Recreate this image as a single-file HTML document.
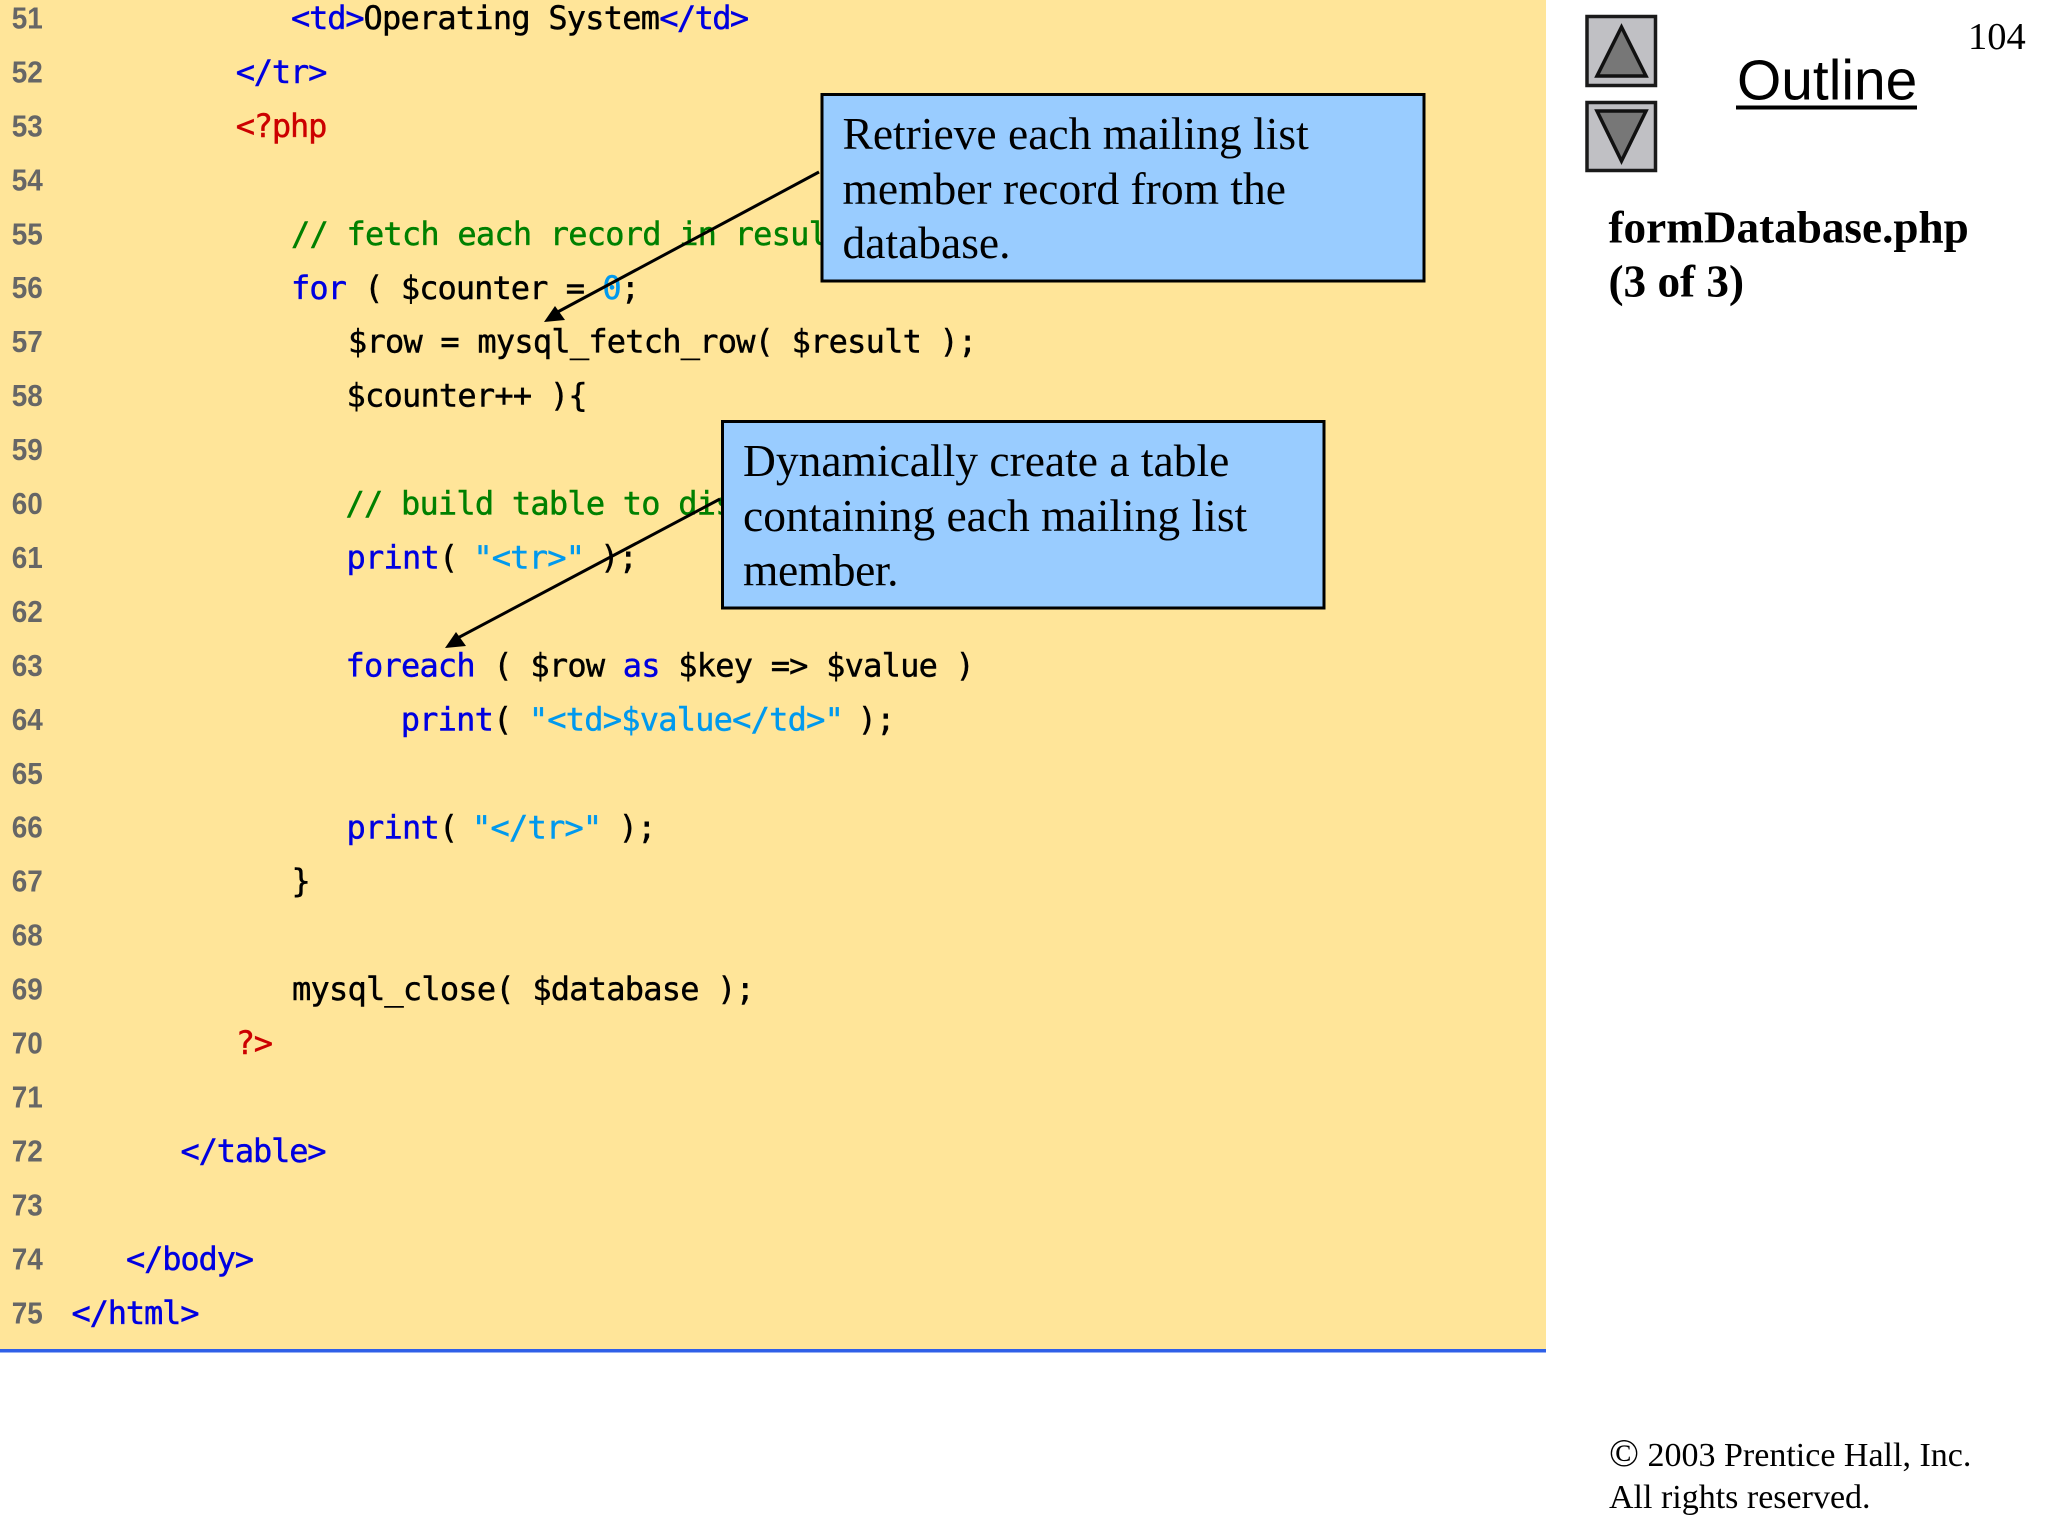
<!DOCTYPE html>
<html><head><meta charset="utf-8"><style>
html,body{margin:0;padding:0;background:#fff;width:2048px;height:1536px;overflow:hidden}
svg{position:absolute;left:0;top:0;display:block}
text{white-space:pre}
.n{font:bold 31px "Liberation Sans",sans-serif;fill:#666}
.c{font:500 32px "DejaVu Sans Mono",monospace;letter-spacing:-.78px;fill:#000;color:#000;stroke:currentColor;stroke-width:.45px}
.b{fill:#0000e0;color:#0000e0}.s{fill:#0099ee;color:#0099ee}.g{fill:#008000;color:#008000}.r{fill:#cc0000;color:#cc0000}
.tg{letter-spacing:-1.15px}
.t{font:45.5px "Liberation Serif",serif;fill:#000}
.h{font:bold 45.2px "Liberation Serif",serif;fill:#000}
.f{font:34px "Liberation Serif",serif;fill:#000}
</style></head><body>
<svg width="2048" height="1536" viewBox="0 0 2048 1536" xmlns="http://www.w3.org/2000/svg">
<rect x="0" y="0" width="1546" height="1349" fill="#ffe599"/>
<rect x="0" y="1349" width="1546" height="3.500" fill="#2f60e8"/>
<g class="n" transform="scale(.9 1)">
<text x="13" y="28.500">51</text><text x="13" y="82.400">52</text><text x="13" y="136.400">53</text><text x="13" y="190.300">54</text><text x="13" y="244.300">55</text><text x="13" y="298.200">56</text><text x="13" y="352.200">57</text><text x="13" y="406.100">58</text><text x="13" y="460.100">59</text><text x="13" y="514">60</text><text x="13" y="568">61</text><text x="13" y="621.900">62</text><text x="13" y="675.900">63</text><text x="13" y="729.800">64</text><text x="13" y="783.800">65</text><text x="13" y="837.700">66</text><text x="13" y="891.700">67</text><text x="13" y="945.600">68</text><text x="13" y="999.600">69</text><text x="13" y="1053.500">70</text><text x="13" y="1107.500">71</text><text x="13" y="1161.400">72</text><text x="13" y="1215.400">73</text><text x="13" y="1269.300">74</text><text x="13" y="1323.300">75</text>
</g>
<g class="c">
<text x="291" y="29"><tspan class="b tg">&lt;td&gt;</tspan>Operating System<tspan class="b" style="letter-spacing:-1.6px">&lt;/td&gt;</tspan></text>
<text x="235.700" y="82.950" class="b tg">&lt;/tr&gt;</text>
<text x="235.700" y="136.900" class="r tg">&lt;?php</text>
<text x="291" y="244.800" class="g">// fetch each record in result set</text>
<text x="291" y="298.750" style="letter-spacing:-.95px"><tspan class="b">for</tspan> ( $counter = <tspan class="s">0</tspan>;</text>
<text x="348" y="352.700">$row = mysql_fetch_row( $result );</text>
<text x="346.500" y="406.650">$counter++ ){</text>
<text x="345.500" y="514.550" class="g">// build table to display results</text>
<text x="346.500" y="568.500"><tspan class="b">print</tspan>( <tspan class="s" dx="-2.600">"&lt;tr&gt;"</tspan><tspan dx="-2.600"> );</tspan></text>
<text x="345.500" y="676.400"><tspan class="b">foreach</tspan> ( $row <tspan class="b">as</tspan> $key =&gt; $value )</text>
<text x="400.700" y="730.350"><tspan class="b">print</tspan>( <tspan class="s" dx="-1.300">"&lt;td&gt;$value&lt;/td&gt;"</tspan><tspan dx="-3.900"> );</tspan></text>
<text x="346.500" y="838.250"><tspan class="b">print</tspan>( <tspan class="s" dx="-3.900">"&lt;/tr&gt;"</tspan><tspan dx="-1.300"> );</tspan></text>
<text x="291.500" y="892.200">}</text>
<text x="292" y="1000.100">mysql_close( $database );</text>
<text x="235.700" y="1054.050" class="r tg">?&gt;</text>
<text x="180.500" y="1161.950" class="b tg">&lt;/table&gt;</text>
<text x="126" y="1269.850" class="b tg">&lt;/body&gt;</text>
<text x="71.500" y="1323.800" class="b tg">&lt;/html&gt;</text>
</g>
<line x1="819" y1="172" x2="552" y2="315" stroke="#000" stroke-width="3"/>
<polygon points="544,322 565,320 555,306" fill="#000"/>
<line x1="720" y1="499" x2="452" y2="641" stroke="#000" stroke-width="3"/>
<polygon points="445,648 466,646 456,632" fill="#000"/>
<rect x="822" y="94.500" width="602" height="186.500" fill="#99ccff" stroke="#000" stroke-width="3"/>
<rect x="722.500" y="421.500" width="601.500" height="186.500" fill="#99ccff" stroke="#000" stroke-width="3"/>
<text class="t" x="842.500" y="149">Retrieve each mailing list</text>
<text class="t" x="842.500" y="204">member record from the</text>
<text class="t" x="842.500" y="258">database.</text>
<text class="t" x="743" y="476">Dynamically create a table</text>
<text class="t" x="743" y="531">containing each mailing list</text>
<text class="t" x="743" y="585.500" style="letter-spacing:-.4px">member.</text>
<rect x="1587" y="16.500" width="68.500" height="69" fill="#c0c0c4" stroke="#1a1a1a" stroke-width="3.500"/>
<polygon points="1621.500,27 1646,76 1597,76" fill="#777" stroke="#111" stroke-width="3.500"/>
<rect x="1587" y="102.500" width="68.500" height="68" fill="#c0c0c4" stroke="#1a1a1a" stroke-width="3.500"/>
<polygon points="1621.500,161 1646,111 1597,111" fill="#777" stroke="#111" stroke-width="3.500"/>
<text x="1968" y="49" style="font:38.500px 'Liberation Serif',serif">104</text>
<text x="1737" y="99.500" style="font:56.900px 'Liberation Sans',sans-serif">Outline</text>
<rect x="1736" y="105.500" width="181" height="4" fill="#000"/>
<text class="h" x="1608.500" y="242.500">formDatabase.php</text>
<text class="h" x="1608.500" y="296.500">(3 of 3)</text>
<text class="f" x="1609" y="1466"><tspan style="font-size:39.500px">©</tspan> 2003 Prentice Hall, Inc.</text>
<text class="f" x="1609" y="1508">All rights reserved.</text>
</svg>
</body></html>
